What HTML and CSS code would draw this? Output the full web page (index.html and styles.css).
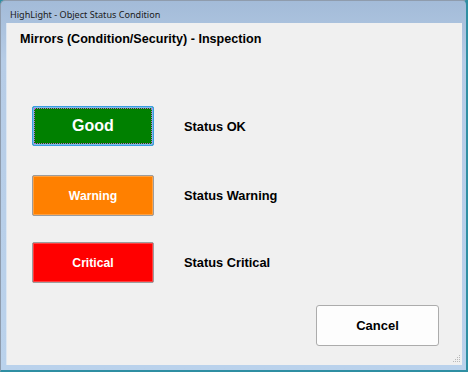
FILE: index.html
```html
<!DOCTYPE html>
<html>
<head>
  <title>HighLight - Object Status Condition</title>
  <link rel="stylesheet" href="styles.css">
</head>
<body>
  <div class="window">
    <div class="titlebar">HighLight - Object Status Condition</div>
    <div class="client">
      <h1 class="heading">Mirrors (Condition/Security) - Inspection</h1>

      <div class="status-list">
        <div class="status-row first">
          <button class="status-btn good">Good</button>
          <span class="status-label">Status OK</span>
        </div>
        <div class="status-row">
          <button class="status-btn warning">Warning</button>
          <span class="status-label">Status Warning</span>
        </div>
        <div class="status-row">
          <button class="status-btn critical">Critical</button>
          <span class="status-label">Status Critical</span>
        </div>
      </div>

      <div class="footer">
        <button class="cancel-btn">Cancel</button>
      </div>

      <svg class="grip" width="8" height="8" viewBox="0 0 8 8">
        <rect x="6" y="0" width="1" height="1" fill="#b8b8b8"/>
        <rect x="4" y="2" width="1" height="1" fill="#b8b8b8"/>
        <rect x="6" y="2" width="1" height="1" fill="#b8b8b8"/>
        <rect x="2" y="4" width="1" height="1" fill="#b8b8b8"/>
        <rect x="4" y="4" width="1" height="1" fill="#b8b8b8"/>
        <rect x="6" y="4" width="1" height="1" fill="#b8b8b8"/>
        <rect x="0" y="6" width="1" height="1" fill="#b8b8b8"/>
        <rect x="2" y="6" width="1" height="1" fill="#b8b8b8"/>
        <rect x="4" y="6" width="1" height="1" fill="#b8b8b8"/>
        <rect x="6" y="6" width="1" height="1" fill="#b8b8b8"/>
      </svg>
    </div>
  </div>
</body>
</html>
```

FILE: styles.css
```css
body {
  margin: 0;
  background-color: #2f8fa3;
  font-family: "Liberation Sans", Arial, sans-serif;
}

.window {
  box-sizing: border-box;
  width: 468px;
  height: 372px;
  display: flex;
  flex-direction: column;
  background: linear-gradient(to bottom, #a3bbd8 0px, #b6cce6 60px, #bad2ec 100%);
  border-top: 1px solid #8f9cad;
  border-left: 1px solid #8f9cad;
  border-right: 2px solid #2f8fa3;
  border-bottom: 2px solid #2f8fa3;
  border-top-left-radius: 5px;
  border-top-right-radius: 5px;
}

.titlebar {
  box-sizing: border-box;
  height: 22px;
  flex: none;
  padding: 5px 0 0 9px;
  font-family: "Noto Sans", sans-serif;
  font-size: 9.1px;
  line-height: 17px;
  color: #1a1a1a;
}

.client {
  position: relative;
  flex: 1;
  margin: 0 4px 5px 5px;
  background-color: #f0f0f0;
  border-left: 1px solid #dbe6f2;
  display: flex;
  flex-direction: column;
}

.heading {
  margin: 0;
  padding: 9px 13px 0;
  font-size: 12.6px;
  line-height: 15px;
  font-weight: bold;
  color: #000;
}

.status-list {
  margin-top: 59px;
  padding-left: 25px;
  display: flex;
  flex-direction: column;
  gap: 26px;
}

.status-row {
  display: flex;
  align-items: center;
}

.status-row.first {
  margin-bottom: 3px;
}

.status-btn {
  box-sizing: border-box;
  width: 122px;
  height: 41px;
  padding: 0;
  border: 1px solid #9c9c9c;
  border-radius: 2px;
  box-shadow: inset 0 0 0 1px rgba(255, 255, 255, 0.25);
  font-family: "Liberation Sans", Arial, sans-serif;
  font-size: 12.2px;
  font-weight: bold;
  color: #fff;
  cursor: pointer;
}

.status-btn.good {
  height: 40px;
  font-size: 16px;
  background-color: #008000;
  border: 1px solid #3c9ce0;
  box-shadow: inset 0 0 0 1px #79bdee;
  outline: 1px dotted #c060c8;
  outline-offset: -3px;
}

.status-btn.warning {
  background-color: #ff8000;
}

.status-btn.critical {
  background-color: #ff0000;
}

.status-label {
  margin-left: 30px;
  font-size: 12.8px;
  font-weight: bold;
  color: #000;
}

.footer {
  margin-top: 22px;
  padding-right: 23px;
  display: flex;
  justify-content: flex-end;
}

.cancel-btn {
  box-sizing: border-box;
  width: 123px;
  height: 41px;
  background-color: #fdfdfd;
  border: 1px solid #acacac;
  border-radius: 3px;
  font-family: "Liberation Sans", Arial, sans-serif;
  font-size: 13px;
  font-weight: bold;
  color: #000;
  cursor: pointer;
}

.grip {
  position: absolute;
  right: 1px;
  bottom: 2px;
}
```
